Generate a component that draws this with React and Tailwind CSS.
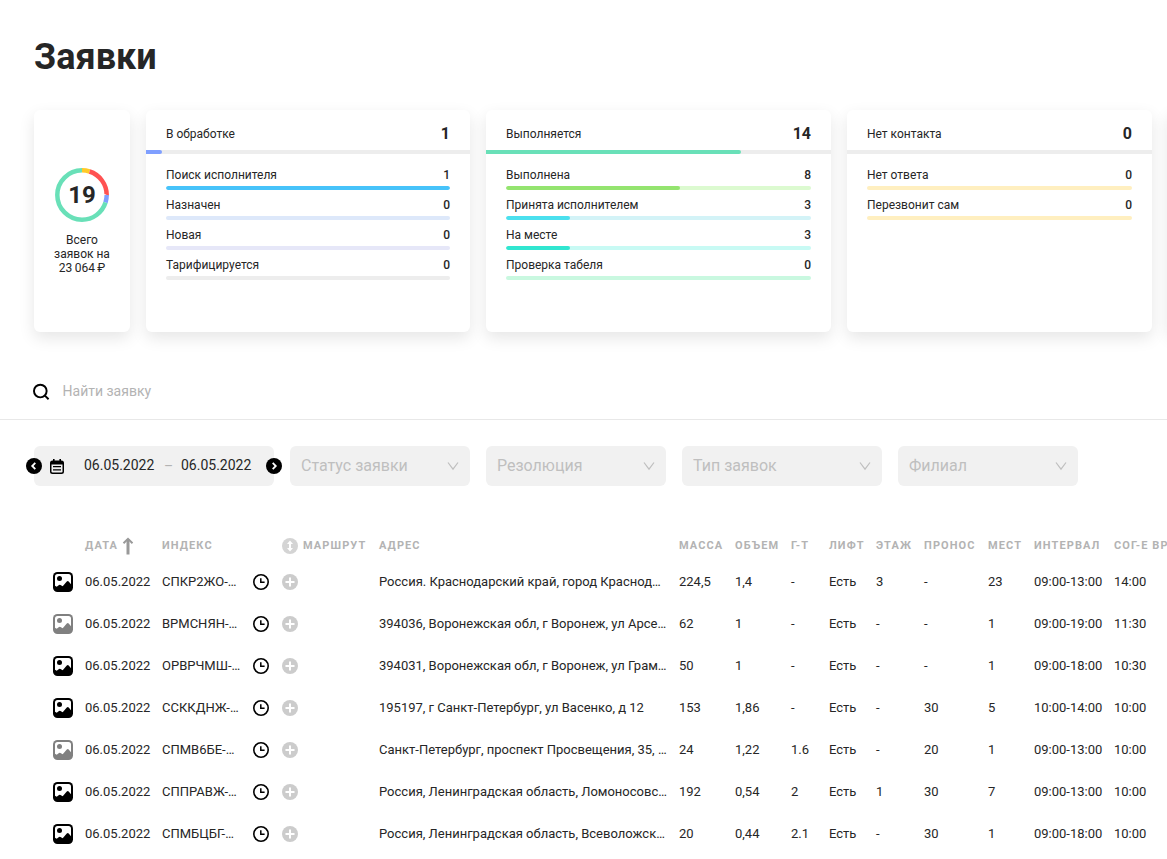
import { useState } from 'react';
import clsx from 'clsx';

const segments = [
  { color: '#ffca28', share: 5 },
  { color: '#ff5252', share: 20 },
  { color: '#7f9fff', share: 5 },
  { color: '#69e0b8', share: 70 },
];

const groups = [
  {
    title: 'В обработке', count: 1, share: 5, bar: 'bg-[#7f9fff]', width: 'w-[324px]',
    items: [
      { label: 'Поиск исполнителя', count: 1, share: 100, bar: 'bg-[#47c3fa]', track: 'bg-[#d3effc]' },
      { label: 'Назначен', count: 0, share: 0, bar: '', track: 'bg-[#dde8fa]' },
      { label: 'Новая', count: 0, share: 0, bar: '', track: 'bg-[#e6e7f8]' },
      { label: 'Тарифицируется', count: 0, share: 0, bar: '', track: 'bg-[#ededed]' },
    ],
  },
  {
    title: 'Выполняется', count: 14, share: 74, bar: 'bg-[#69e0b8]', width: 'w-[345px]',
    items: [
      { label: 'Выполнена', count: 8, share: 57, bar: 'bg-[#94e46f]', track: 'bg-[#dcfad0]' },
      { label: 'Принята исполнителем', count: 3, share: 21, bar: 'bg-[#4be0ee]', track: 'bg-[#d3f3f7]' },
      { label: 'На месте', count: 3, share: 21, bar: 'bg-[#31e6d0]', track: 'bg-[#c8faf4]' },
      { label: 'Проверка табеля', count: 0, share: 0, bar: '', track: 'bg-[#c9f8e0]' },
    ],
  },
  {
    title: 'Нет контакта', count: 0, share: 0, bar: '', width: 'w-[305px]',
    items: [
      { label: 'Нет ответа', count: 0, share: 0, bar: '', track: 'bg-[#ffefc0]' },
      { label: 'Перезвонит сам', count: 0, share: 0, bar: '', track: 'bg-[#ffefc0]' },
    ],
  },
];

const filters = [
  { label: 'Статус заявки', width: 'w-[180px]' },
  { label: 'Резолюция', width: 'w-[180px]' },
  { label: 'Тип заявок', width: 'w-[200px]' },
  { label: 'Филиал', width: 'w-[180px]' },
];

const columns = [
  { title: 'Масса', width: 'w-[56px]' },
  { title: 'Объем', width: 'w-[56px]' },
  { title: 'Г-Т', width: 'w-[38px]' },
  { title: 'Лифт', width: 'w-[47px]' },
  { title: 'Этаж', width: 'w-[48px]' },
  { title: 'Пронос', width: 'w-[64px]' },
  { title: 'Мест', width: 'w-[46px]' },
  { title: 'Интервал', width: 'w-[80px]' },
  { title: 'Сог-е время', width: 'w-[110px]' },
];

const orders = [
  { photo: true, index: 'СПКР2ЖО-…', address: 'Россия. Краснодарский край, город Краснод…', cells: ['224,5', '1,4', '-', 'Есть', '3', '-', '23', '09:00-13:00', '14:00'] },
  { photo: false, index: 'ВРМСНЯН-…', address: '394036, Воронежская обл, г Воронеж, ул Арсе…', cells: ['62', '1', '-', 'Есть', '-', '-', '1', '09:00-19:00', '11:30'] },
  { photo: true, index: 'ОРВРЧМШ-…', address: '394031, Воронежская обл, г Воронеж, ул Грам…', cells: ['50', '1', '-', 'Есть', '-', '-', '1', '09:00-18:00', '10:30'] },
  { photo: true, index: 'ССККДНЖ-…', address: '195197, г Санкт-Петербург, ул Васенко, д 12', cells: ['153', '1,86', '-', 'Есть', '-', '30', '5', '10:00-14:00', '10:00'] },
  { photo: false, index: 'СПМВ6БЕ-…', address: 'Санкт-Петербург, проспект Просвещения, 35, …', cells: ['24', '1,22', '1.6', 'Есть', '-', '20', '1', '09:00-13:00', '10:00'] },
  { photo: true, index: 'СППРАВЖ-…', address: 'Россия, Ленинградская область, Ломоносовс…', cells: ['192', '0,54', '2', 'Есть', '1', '30', '7', '09:00-13:00', '10:00'] },
  { photo: true, index: 'СПМБЦБГ-…', address: 'Россия, Ленинградская область, Всеволожск…', cells: ['20', '0,44', '2.1', 'Есть', '-', '30', '1', '09:00-18:00', '10:00'] },
];

const cardCls = 'shrink-0 rounded-md bg-white shadow-[0_6px_16px_rgba(0,0,0,0.1)]';

function Donut() {
  let offset = 0;
  return (
    <svg viewBox="0 0 54 54" className="h-full w-full -rotate-90" fill="none" strokeWidth="4.500" aria-hidden="true">
      {segments.map((s) => {
        const start = offset;
        offset += s.share;
        return (
          <circle key={s.color} cx="27" cy="27" r="24.700" pathLength="100" stroke={s.color} strokeDasharray={`${s.share} ${100 - s.share}`} strokeDashoffset={-start} />
        );
      })}
    </svg>
  );
}

function PhotoIcon() {
  return (
    <svg viewBox="0 0 20 20" className="h-5 w-5" aria-hidden="true">
      <rect width="20" height="20" rx="4.5" fill="currentColor" />
      <path fill="#fff" d="M4.5 2h11A2.500 2.500 0 0 1 18 4.500v7.700l-2.300-2.700a1.300 1.300 0 0 0-1.900-.1L9.700 14.300 7.500 12.900a1.300 1.300 0 0 0-1.500 0L3.700 14.800 2 13.800v-9.300A2.500 2.500 0 0 1 4.500 2z" />
      <circle cx="6.500" cy="6.500" r="2.500" fill="currentColor" />
    </svg>
  );
}

function ClockIcon() {
  return (
    <svg viewBox="0 0 16 16" className="h-4 w-4" fill="none" stroke="currentColor" aria-hidden="true">
      <circle cx="8" cy="8" r="7.200" strokeWidth="1.600" />
      <path d="M7.800 4.300V8.200H11.600" strokeWidth="1.500" />
    </svg>
  );
}

function PlusIcon() {
  return (
    <svg viewBox="0 0 16 16" className="h-4 w-4" aria-hidden="true">
      <circle cx="8" cy="8" r="8" fill="currentColor" />
      <path d="M8 3.500v9M3.500 8h9" stroke="#fff" strokeWidth="2" />
    </svg>
  );
}

function UnfoldIcon() {
  return (
    <svg viewBox="0 0 16 16" className="h-4 w-4" aria-hidden="true">
      <circle cx="8" cy="8" r="8" fill="currentColor" />
      <path d="M8 2.500 11 6H9v4h2l-3 3.500L5 10h2V6H5z" fill="#fff" />
    </svg>
  );
}

function SortIcon() {
  return (
    <svg viewBox="0 0 12 18" className="h-[18px] w-3" fill="none" stroke="#999" aria-hidden="true">
      <path d="M6 17.500V2" strokeWidth="3" />
      <path d="M1.500 6.200 6 1.800l4.500 4.400" strokeWidth="2" />
    </svg>
  );
}

function SearchIcon() {
  return (
    <svg viewBox="0 0 18 18" className="h-[18px] w-[18px]" fill="none" stroke="#000" strokeWidth="2" aria-hidden="true">
      <circle cx="7.500" cy="8" r="6.500" />
      <path d="m12.200 12.700 3.800 3.800" />
    </svg>
  );
}

function CalendarIcon() {
  return (
    <svg viewBox="0 0 14 15" className="h-[15px] w-[14px]" aria-hidden="true">
      <path d="M3 0h1.600v1.500h4.800V0H11v1.500h.5A2.500 2.500 0 0 1 14 4v8.500a2.500 2.500 0 0 1-2.500 2.500h-9A2.500 2.500 0 0 1 0 12.500V4a2.500 2.500 0 0 1 2.500-2.500H3z" />
      <path d="M1.500 5.500h11v6.700a1.200 1.200 0 0 1-1.200 1.200H2.700a1.200 1.200 0 0 1-1.200-1.200z" fill="#f1f1f1" />
      <path d="M3 7.700h8M3 10.900h8" stroke="#000" strokeWidth="1.200" />
    </svg>
  );
}

function StepButton({ side, label }) {
  return (
    <button
      type="button"
      aria-label={label}
      className={clsx('absolute top-3 h-4 w-4 cursor-pointer rounded-full bg-black', side === 'left' ? '-left-2' : '-right-2')}
    >
      <svg viewBox="0 0 16 16" className={clsx('h-4 w-4', side === 'right' && 'rotate-180')} fill="none" stroke="#fff" strokeWidth="1.800" aria-hidden="true">
        <path d="M9.300 4.800 6.200 8l3.100 3.200" />
      </svg>
    </button>
  );
}

function GroupCard({ group }) {
  return (
    <section className={clsx(cardCls, group.width)}>
      <div className="flex items-center justify-between px-5 pt-[13px] pb-[5px]">
        <h2 className="text-xs leading-[22px]">{group.title}</h2>
        <span className="text-base leading-[22px] font-bold">{group.count}</span>
      </div>
      <div className="h-1 bg-[#ededed]">
        <div className={clsx('h-1 rounded-r-sm', group.bar)} style={{ width: `${group.share}%` }} />
      </div>
      <ul className="flex flex-col gap-1.5 px-5 pt-3">
        {group.items.map((item) => (
          <li key={item.label}>
            <div className="flex justify-between text-xs leading-[18px]">
              <span>{item.label}</span>
              <span className="font-medium">{item.count}</span>
            </div>
            <div className={clsx('mt-0.5 h-1 overflow-hidden rounded-sm', item.track)}>
              <div className={clsx('h-1 rounded-sm', item.bar)} style={{ width: `${item.share}%` }} />
            </div>
          </li>
        ))}
      </ul>
    </section>
  );
}

function FilterSelect({ filter }) {
  return (
    <div className={clsx('relative shrink-0', filter.width)}>
      <select aria-label={filter.label} className="h-10 w-full cursor-pointer appearance-none rounded-md bg-[#f1f1f1] pr-8 pl-[11px] text-base text-[#bfbfbf] outline-none">
        <option>{filter.label}</option>
      </select>
      <svg viewBox="0 0 12 12" className="pointer-events-none absolute top-3.5 right-[11px] h-3 w-3" fill="none" stroke="#bfbfbf" strokeWidth="1.200" aria-hidden="true">
        <path d="M1 2.500 6 9.200 11 2.500" />
      </svg>
    </div>
  );
}

export default function App() {
  const [query, setQuery] = useState('');
  const [from, setFrom] = useState('06.05.2022');
  const [to, setTo] = useState('06.05.2022');

  return (
    <main className="min-h-screen overflow-hidden bg-white font-[Roboto,sans-serif] text-[#262626]">
      <h1 className="px-[34px] pt-9 text-4xl leading-[42px] font-bold">Заявки</h1>

      <div className="flex gap-4 overflow-hidden pt-8 pb-8 pl-[34px]">
        <section className={clsx(cardCls, 'flex h-[222px] w-24 flex-col items-center pt-[58px] text-center')}>
          <div className="grid h-[54px] w-[54px] place-items-center *:col-start-1 *:row-start-1">
            <Donut />
            <span className="text-2xl font-bold">19</span>
          </div>
          <p className="mt-[11px] px-4 text-xs leading-[14px]">Всего заявок на 23&#8201;064&#8201;₽</p>
        </section>
        {groups.map((group) => <GroupCard key={group.title} group={group} />)}
        <section className={clsx(cardCls, 'w-[305px]')} />
      </div>

      <label className="flex h-14 items-center gap-3 border-b border-[#e8e8e8] pl-[33px]">
        <SearchIcon />
        <input
          type="search"
          aria-label="Найти заявку"
          value={query}
          onChange={(e) => setQuery(e.target.value)}
          placeholder="Найти заявку"
          className="w-full pb-0.5 text-sm outline-none placeholder:text-[#b3b3b3]"
        />
      </label>

      <div className="flex gap-4 pt-[26px] pl-[34px]">
        <div className="relative flex h-10 w-60 shrink-0 items-center rounded-md bg-[#f1f1f1] pl-4 text-sm">
          <StepButton side="left" label="Предыдущий день" />
          <CalendarIcon />
          <input aria-label="Дата с" value={from} onChange={(e) => setFrom(e.target.value)} className="ml-5 w-[76px] pb-0.5 outline-none" />
          <span className="w-[21px] pl-1 text-[#b3b3b3]">–</span>
          <input aria-label="Дата по" value={to} onChange={(e) => setTo(e.target.value)} className="w-[76px] pb-0.5 outline-none" />
          <StepButton side="right" label="Следующий день" />
        </div>
        {filters.map((filter) => <FilterSelect key={filter.label} filter={filter} />)}
      </div>

      <div className="overflow-hidden pt-[45px] pl-[47px]">
        <table className="w-[1171px] table-fixed text-left text-[13px] *:*:*:px-1.5">
          <thead>
            <tr className="h-[30px] text-[11px] tracking-widest text-[#b3b3b3] uppercase *:font-bold *:whitespace-nowrap">
              <th className="w-8" aria-label="Фото" />
              <th className="w-[77px]">
                <span className="flex items-center gap-1">Дата <SortIcon /></span>
              </th>
              <th className="w-[91px]">Индекс</th>
              <th className="w-[29px]" aria-label="Время" />
              <th className="w-[97px]">
                <span className="flex items-center gap-[5px]">
                  <span className="text-[#d4d4d4]"><UnfoldIcon /></span>
                  Маршрут
                </span>
              </th>
              <th className="w-[300px]">Адрес</th>
              {columns.map((c) => <th key={c.title} className={c.width}>{c.title}</th>)}
            </tr>
          </thead>
          <tbody>
            {orders.map((order) => (
              <tr key={order.index} className="h-[42px] *:whitespace-nowrap">
                <td className={order.photo ? 'text-black' : 'text-[#808080]'}><PhotoIcon /></td>
                <td>06.05.2022</td>
                <td>{order.index}</td>
                <td className="text-black"><ClockIcon /></td>
                <td>
                  <button type="button" aria-label="Добавить в маршрут" className="block cursor-pointer text-[#ccc]"><PlusIcon /></button>
                </td>
                <td>{order.address}</td>
                {order.cells.map((cell, i) => <td key={columns[i].title}>{cell}</td>)}
              </tr>
            ))}
          </tbody>
        </table>
      </div>
    </main>
  );
}
